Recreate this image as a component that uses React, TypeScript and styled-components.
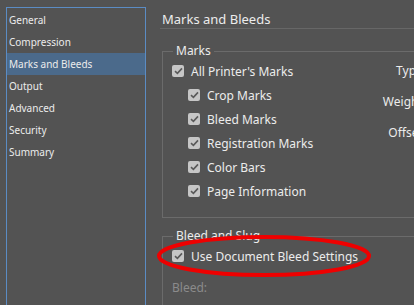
import React from "react";
import styled, { createGlobalStyle } from "styled-components";

const GlobalStyle = createGlobalStyle`
  html, body {
    margin: 0;
    padding: 0;
    background: #535353;
  }
  body {
    font-family: "Noto Sans", "Open Sans", sans-serif;
    color: #e6e6e6;
  }
`;

const Window = styled.div`
  display: flex;
  width: 414px;
  height: 305px;
  overflow: hidden;
  background: #535353;
`;

const Sidebar = styled.ul`
  list-style: none;
  margin: 7px 0 0 6px;
  padding: 1px 0 0;
  width: 138px;
  height: 320px;
  flex-shrink: 0;
  border: 1px solid #5b8cc4;
  border-bottom: none;
`;

const NavItem = styled.li<{ $active?: boolean }>`
  height: 22px;
  line-height: 22px;
  padding-left: 2px;
  font-size: 10px;
  color: #ececec;
  background: ${({ $active }) => ($active ? "#4b6a8b" : "transparent")};
`;

const Main = styled.main`
  flex: 1;
  min-width: 0;
  margin-left: 14px;
`;

const Header = styled.h1`
  margin: 0;
  height: 29px;
  padding: 10px 0 0 2px;
  box-sizing: border-box;
  font-size: 13px;
  font-weight: normal;
  line-height: 18px;
  color: #ececec;
  border-bottom: 1px solid #676767;
  width: 600px;
`;

const Group = styled.fieldset<{ $gap: number }>`
  position: relative;
  margin: ${({ $gap }) => $gap}px 0 0 2px;
  padding: 1px 9px 14px;
  width: 400px;
  border: 1px solid #6b6b6b;
  border-radius: 0;
`;

const Legend = styled.legend`
  margin-left: 1px;
  padding: 0 3px;
  font-size: 12px;
  line-height: 14px;
  color: #ececec;
`;

const Columns = styled.div`
  display: flex;
`;

const OptionList = styled.div`
  width: 204px;
  display: flex;
  flex-direction: column;
`;

const Option = styled.label<{ $indent?: boolean }>`
  display: flex;
  align-items: center;
  gap: 7px;
  height: 24px;
  padding-left: ${({ $indent }) => ($indent ? "16px" : "0")};
  font-size: 12px;
  color: #ececec;
`;

const Box = styled.span`
  width: 12px;
  height: 12px;
  border-radius: 2px;
  background: #c6c6c6;
  display: flex;
  align-items: center;
  justify-content: center;
  flex-shrink: 0;
`;

const SideLabels = styled.div`
  width: 50px;
  display: flex;
  flex-direction: column;
  gap: 7px;
`;

const SideLabel = styled.span`
  height: 24px;
  line-height: 24px;
  font-size: 12px;
  text-align: right;
  color: #ececec;
  white-space: nowrap;
`;

const Muted = styled.div`
  margin-top: 8px;
  height: 24px;
  line-height: 24px;
  font-size: 12px;
  color: #8b8b8b;
`;

const Highlight = styled.svg`
  position: absolute;
  left: -7px;
  top: -10px;
  pointer-events: none;
`;

const Check = () => (
  <Box>
    <svg width="9" height="8" viewBox="0 0 9 8">
      <path d="M1 4.2 L3.4 6.4 L8 1.4" fill="none" stroke="#5a5a5a" strokeWidth="1.6" />
    </svg>
  </Box>
);

const nav = ["General", "Compression", "Marks and Bleeds", "Output", "Advanced", "Security", "Summary"];
const marks = ["Crop Marks", "Bleed Marks", "Registration Marks", "Color Bars", "Page Information"];

const App: React.FC = () => (
  <>
    <GlobalStyle />
    <Window>
      <Sidebar>
        {nav.map((n) => (
          <NavItem key={n} $active={n === "Marks and Bleeds"}>{n}</NavItem>
        ))}
      </Sidebar>
      <Main>
        <Header>Marks and Bleeds</Header>
        <Group $gap={15}>
          <Legend>Marks</Legend>
          <Columns>
            <OptionList>
              <Option><Check />All Printer's Marks</Option>
              {marks.map((m) => (
                <Option key={m} $indent><Check />{m}</Option>
              ))}
            </OptionList>
            <SideLabels>
              <SideLabel>Type:</SideLabel>
              <SideLabel>Weight:</SideLabel>
              <SideLabel>Offset:</SideLabel>
            </SideLabels>
          </Columns>
        </Group>
        <Group $gap={11}>
          <Legend>Bleed and Slug</Legend>
          <Option><Check />Use Document Bleed Settings</Option>
          <Muted>Bleed:</Muted>
          <Highlight width="218" height="46" viewBox="0 0 218 46">
            <ellipse cx="108" cy="23" rx="105" ry="19" fill="none" stroke="#ee0000" strokeWidth="4" />
          </Highlight>
        </Group>
      </Main>
    </Window>
  </>
);

export default App;
